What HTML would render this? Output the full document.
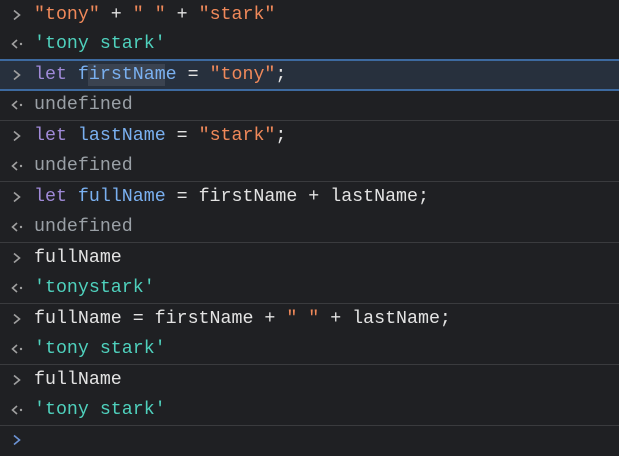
<!DOCTYPE html>
<html><head><style>
body{margin:0;width:619px;height:456px;background:#1f2023;overflow:hidden;font-family:"Liberation Mono",monospace;font-size:18.3px;color:#e3e3e3}
.r{position:absolute;left:0;width:619px;height:30px;line-height:30px}
.p{position:absolute;left:10px;top:8px;width:16px;height:14px}
.t{position:absolute;left:34px;top:0;white-space:pre}
.s{color:#f0895a}.o{color:#4fd1bd}.k{color:#a08ad8}.v{color:#7ab0f0}.u{color:#9aa0a6}
.sep{position:absolute;left:0;width:619px;height:1px;background:#3a3b3e}
</style></head><body>
<svg width="0" height="0" style="position:absolute"><defs>
<symbol id="in" viewBox="0 0 16 14"><path d="M4 2.5 L9.5 7 L4 11.5" fill="none" stroke="#a0a0a0" stroke-width="1.6"/></symbol>
<symbol id="out" viewBox="0 0 16 14"><path d="M7 3 L2.5 7 L7 11" fill="none" stroke="#a0a0a0" stroke-width="1.6"/><circle cx="11" cy="7" r="1.2" fill="#a0a0a0"/></symbol>
<symbol id="pr" viewBox="0 0 16 14"><path d="M4 2.5 L9.5 7 L4 11.5" fill="none" stroke="#6d94d6" stroke-width="1.6"/></symbol>
</defs></svg>
<div class="r" style="top:0"><svg class="p"><use href="#in"/></svg><span class="t"><span class="s">"tony"</span> + <span class="s">" "</span> + <span class="s">"stark"</span></span></div>
<div class="r" style="top:29px"><svg class="p"><use href="#out"/></svg><span class="t o">'tony stark'</span></div>
<div style="position:absolute;top:59px;left:0;width:619px;height:28px;background:#27303d;border-top:2px solid #3d6aa0;border-bottom:2px solid #3d6aa0"></div>
<div style="position:absolute;top:64px;left:88px;width:77px;height:22px;background:#3b4350"></div>
<div class="r" style="top:60px"><svg class="p"><use href="#in"/></svg><span class="t"><span class="k">let</span> <span class="v">firstName</span> = <span class="s">"tony"</span>;</span></div>
<div class="r" style="top:90px"><svg class="p"><use href="#out"/></svg><span class="t u">undefined</span></div>
<div class="sep" style="top:120px"></div>
<div class="r" style="top:121px"><svg class="p"><use href="#in"/></svg><span class="t"><span class="k">let</span> <span class="v">lastName</span> = <span class="s">"stark"</span>;</span></div>
<div class="r" style="top:151px"><svg class="p"><use href="#out"/></svg><span class="t u">undefined</span></div>
<div class="sep" style="top:181px"></div>
<div class="r" style="top:182px"><svg class="p"><use href="#in"/></svg><span class="t"><span class="k">let</span> <span class="v">fullName</span> = firstName + lastName;</span></div>
<div class="r" style="top:212px"><svg class="p"><use href="#out"/></svg><span class="t u">undefined</span></div>
<div class="sep" style="top:242px"></div>
<div class="r" style="top:243px"><svg class="p"><use href="#in"/></svg><span class="t">fullName</span></div>
<div class="r" style="top:273px"><svg class="p"><use href="#out"/></svg><span class="t o">'tonystark'</span></div>
<div class="sep" style="top:303px"></div>
<div class="r" style="top:304px"><svg class="p"><use href="#in"/></svg><span class="t">fullName = firstName + <span class="s">" "</span> + lastName;</span></div>
<div class="r" style="top:334px"><svg class="p"><use href="#out"/></svg><span class="t o">'tony stark'</span></div>
<div class="sep" style="top:364px"></div>
<div class="r" style="top:365px"><svg class="p"><use href="#in"/></svg><span class="t">fullName</span></div>
<div class="r" style="top:395px"><svg class="p"><use href="#out"/></svg><span class="t o">'tony stark'</span></div>
<div class="sep" style="top:425px"></div>
<div class="r" style="top:425px"><svg class="p"><use href="#pr"/></svg></div>
</body></html>
